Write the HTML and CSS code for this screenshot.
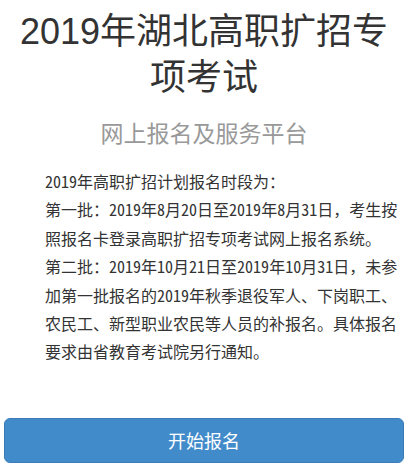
FILE: index.html
```html
<!DOCTYPE html>
<html lang="zh-CN">
<head>
    <meta charset="UTF-8">
    <meta name="viewport" content="width=device-width, initial-scale=1.0">
    <title>2019年湖北高职扩招专项考试</title>
    <link rel="stylesheet" href="styles.css">
</head>
<body>
    <div class="page">
        <!-- 标题 -->
        <h1 class="page-title">2019年湖北高职扩招专项考试</h1>
        <h3 class="page-subtitle">网上报名及服务平台</h3>

        <!-- 报名时段说明，数字用半角字形 -->
        <div class="notice">
            <p><span class="num">2019</span>年高职扩招计划报名时段为：</p>
            <p>第一批：<span class="num">2019</span>年<span class="num">8</span>月<span class="num">20</span>日至<span class="num">2019</span>年<span class="num">8</span>月<span class="num">31</span>日，考生按照报名卡登录高职扩招专项考试网上报名系统。</p>
            <p>第二批：<span class="num">2019</span>年<span class="num">10</span>月<span class="num">21</span>日至<span class="num">2019</span>年<span class="num">10</span>月<span class="num">31</span>日，未参加第一批报名的<span class="num">2019</span>年秋季退役军人、下岗职工、农民工、新型职业农民等人员的补报名。具体报名要求由省教育考试院另行通知。</p>
        </div>

        <div class="actions">
            <a class="btn-primary" href="#">开始报名</a>
        </div>
    </div>
</body>
</html>
```

FILE: styles.css
```css
* {
    margin: 0;
    padding: 0;
    box-sizing: border-box;
}

body {
    background: #fff;
    color: #333;
    font-family: "Liberation Sans", "Noto Sans CJK SC", sans-serif;
}

.page {
    padding: 9px 7px 0 4px;
}

.page-title {
    font-size: 36px;
    font-weight: normal;
    line-height: 46px;
    text-align: center;
    color: #333;
}

.page-subtitle {
    margin-top: 18px;
    font-size: 23px;
    font-weight: normal;
    line-height: 30px;
    text-align: center;
    color: #999;
}

.notice {
    margin-top: 18px;
    padding-left: 41px;
    width: 397px;
    font-family: "Noto Sans CJK SC", sans-serif;
    font-size: 16px;
    line-height: 28.4px;
    color: #333;
}

.num {
    font-feature-settings: "hwid";
}

.actions {
    margin-top: 52px;
}

.btn-primary {
    display: block;
    height: 45px;
    line-height: 43px;
    border: 1px solid #3b7cb8;
    border-radius: 6px;
    background: #428bca;
    color: #fff;
    font-family: "Noto Sans CJK SC", sans-serif;
    font-size: 18px;
    text-align: center;
    text-decoration: none;
}
```
